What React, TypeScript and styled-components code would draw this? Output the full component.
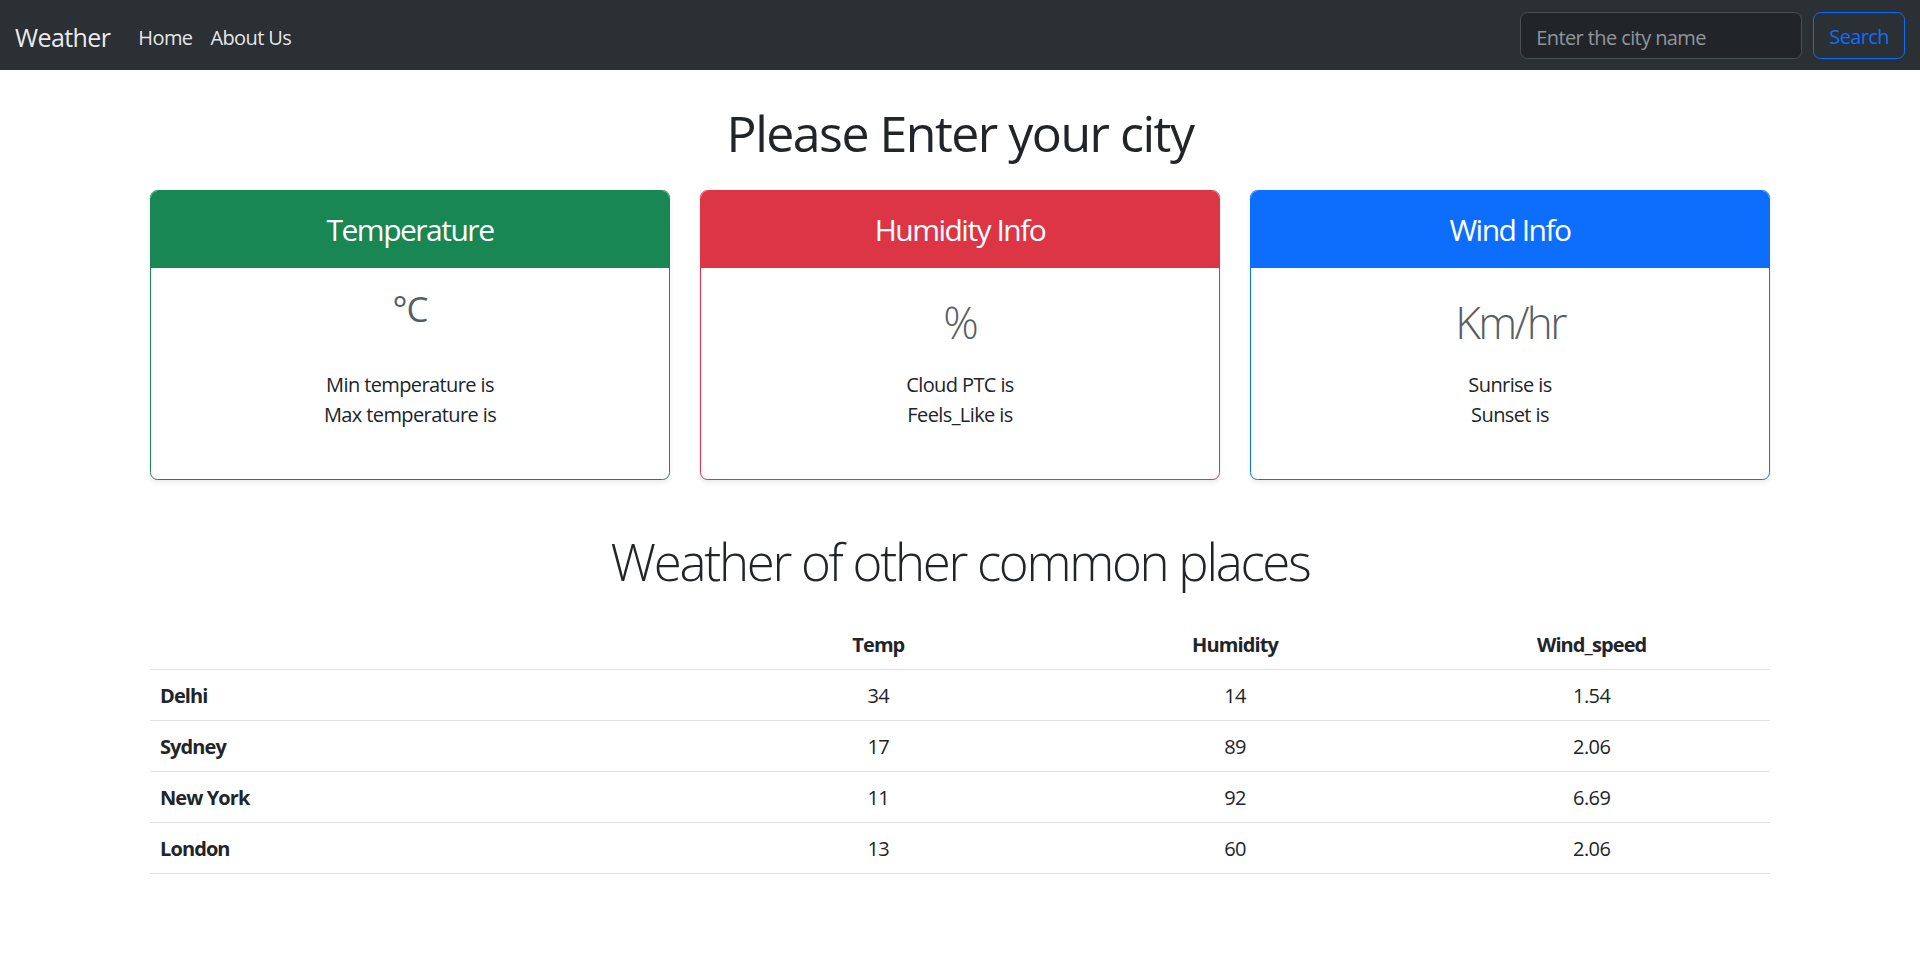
import React from "react";
import styled, { createGlobalStyle } from "styled-components";

const GlobalStyle = createGlobalStyle`
  *, *::before, *::after { box-sizing: border-box; }
  body {
    margin: 0;
    background: #fff;
    color: #212529;
    font-family: "Segoe UI", "Open Sans", "Noto Sans", sans-serif;
    font-size: 20px;
    line-height: 1.5;
    letter-spacing: -0.03em;
  }
`;

const Navbar = styled.nav`
  height: 70px;
  background: #2b3035;
  display: flex;
  align-items: center;
  justify-content: space-between;
  padding: 10px 15px;
`;

const NavLeft = styled.div`
  display: flex;
  align-items: center;
`;

const Brand = styled.a`
  font-size: 25px;
  line-height: 37.5px;
  padding: 9px 0 3px;
  margin-right: 19px;
  color: rgba(255, 255, 255, 0.92);
  text-decoration: none;
`;

const NavList = styled.ul`
  display: flex;
  list-style: none;
  margin: 0;
  padding: 0;
`;

const NavLink = styled.a`
  display: block;
  padding: 13px 9px 7px;
  font-size: 20px;
  line-height: 30px;
  color: rgba(255, 255, 255, 0.9);
  text-decoration: none;
`;

const SearchForm = styled.form`
  display: flex;
  gap: 11px;
`;

const SearchInput = styled.input`
  width: 282px;
  height: 47px;
  padding: 9px 15px 5px;
  font: inherit;
  font-size: 20px;
  letter-spacing: -0.03em;
  color: #dee2e6;
  background: #212529;
  border: 1px solid #495057;
  border-radius: 7.5px;
  outline: none;
  &::placeholder {
    color: rgba(222, 226, 230, 0.6);
  }
`;

const SearchButton = styled.button`
  height: 47px;
  padding: 9px 15px 5px;
  font: inherit;
  font-size: 20px;
  letter-spacing: -0.03em;
  color: #0d6efd;
  background: transparent;
  border: 1px solid #0d6efd;
  border-radius: 7.5px;
`;

const Container = styled.main`
  max-width: 1650px;
  margin: 0 auto;
  padding: 0 15px;
`;

const Title = styled.h1`
  margin: 33px 0 27px;
  font-size: 50px;
  line-height: 60px;
  font-weight: 400;
  letter-spacing: -0.03em;
  text-align: center;
`;

const CardGrid = styled.div`
  display: grid;
  grid-template-columns: repeat(3, 1fr);
  gap: 30px;
`;

const Card = styled.section<{ $color: string }>`
  border: 1px solid ${(p) => p.$color};
  border-radius: 7.5px;
  overflow: hidden;
  background: #fff;
  box-shadow: 0 2.5px 5px rgba(0, 0, 0, 0.075);
`;

const CardHeader = styled.h4<{ $color: string }>`
  margin: 0;
  padding: 21px 20px 20px;
  background: ${(p) => p.$color};
  color: #fff;
  font-size: 30px;
  line-height: 36px;
  font-weight: 400;
  letter-spacing: -0.05em;
  text-align: center;
`;

const CardBody = styled.div`
  padding: 0 20px 49px;
  text-align: center;
`;

const UnitArea = styled.div<{ $offset: number }>`
  height: 102px;
  padding-top: ${(p) => p.$offset}px;
`;

const Unit = styled.div<{ $size: number; $weight: number; $spacing: number }>`
  font-size: ${(p) => p.$size}px;
  line-height: 1.2;
  font-weight: ${(p) => p.$weight};
  letter-spacing: ${(p) => p.$spacing}em;
  color: #595e63;
`;

const InfoLine = styled.p`
  margin: 0;
  font-size: 20px;
  line-height: 30px;
`;

const SectionTitle = styled.h2`
  margin: 50px 0 27px;
  font-size: 51px;
  line-height: 62px;
  font-weight: 300;
  letter-spacing: -0.045em;
  text-align: center;
`;

const Table = styled.table`
  width: 100%;
  border-collapse: collapse;
  table-layout: fixed;
  font-size: 20px;
  line-height: 30px;
`;

const HeadCell = styled.th<{ $first?: boolean }>`
  padding: 11px 10px 9px;
  border-bottom: 1px solid #dee2e6;
  font-weight: 700;
  letter-spacing: -0.045em;
  text-align: ${(p) => (p.$first ? "left" : "center")};
  width: ${(p) => (p.$first ? "550px" : "auto")};
`;

const RowHead = styled.th`
  padding: 11px 10px 9px;
  border-bottom: 1px solid #dee2e6;
  font-weight: 700;
  letter-spacing: -0.045em;
  text-align: left;
`;

const Cell = styled.td`
  padding: 11px 10px 9px;
  border-bottom: 1px solid #dee2e6;
  text-align: center;
`;

const cards = [
  {
    title: "Temperature",
    color: "#198754",
    unit: "°C",
    size: 35,
    weight: 400,
    spacing: -0.03,
    offset: 20,
    lines: ["Min temperature is", "Max temperature is"],
  },
  {
    title: "Humidity Info",
    color: "#dc3545",
    unit: "%",
    size: 44,
    weight: 300,
    spacing: -0.05,
    offset: 28,
    lines: ["Cloud PTC is", "Feels_Like is"],
  },
  {
    title: "Wind Info",
    color: "#0d6efd",
    unit: "Km/hr",
    size: 44,
    weight: 300,
    spacing: -0.06,
    offset: 28,
    lines: ["Sunrise is", "Sunset is"],
  },
];

const places = [
  { city: "Delhi", temp: "34", humidity: "14", wind: "1.54" },
  { city: "Sydney", temp: "17", humidity: "89", wind: "2.06" },
  { city: "New York", temp: "11", humidity: "92", wind: "6.69" },
  { city: "London", temp: "13", humidity: "60", wind: "2.06" },
];

export default function App() {
  return (
    <>
      <GlobalStyle />
      <Navbar>
        <NavLeft>
          <Brand href="#">Weather</Brand>
          <NavList>
            <li>
              <NavLink href="#">Home</NavLink>
            </li>
            <li>
              <NavLink href="#">About Us</NavLink>
            </li>
          </NavList>
        </NavLeft>
        <SearchForm onSubmit={(e) => e.preventDefault()}>
          <SearchInput placeholder="Enter the city name" />
          <SearchButton type="submit">Search</SearchButton>
        </SearchForm>
      </Navbar>
      <Container>
        <Title>Please Enter your city</Title>
        <CardGrid>
          {cards.map((c) => (
            <Card key={c.title} $color={c.color}>
              <CardHeader $color={c.color}>{c.title}</CardHeader>
              <CardBody>
                <UnitArea $offset={c.offset}>
                  <Unit $size={c.size} $weight={c.weight} $spacing={c.spacing}>
                    {c.unit}
                  </Unit>
                </UnitArea>
                {c.lines.map((l) => (
                  <InfoLine key={l}>{l}</InfoLine>
                ))}
              </CardBody>
            </Card>
          ))}
        </CardGrid>
        <SectionTitle>Weather of other common places</SectionTitle>
        <Table>
          <thead>
            <tr>
              <HeadCell $first></HeadCell>
              <HeadCell>Temp</HeadCell>
              <HeadCell>Humidity</HeadCell>
              <HeadCell>Wind_speed</HeadCell>
            </tr>
          </thead>
          <tbody>
            {places.map((p) => (
              <tr key={p.city}>
                <RowHead>{p.city}</RowHead>
                <Cell>{p.temp}</Cell>
                <Cell>{p.humidity}</Cell>
                <Cell>{p.wind}</Cell>
              </tr>
            ))}
          </tbody>
        </Table>
      </Container>
    </>
  );
}
